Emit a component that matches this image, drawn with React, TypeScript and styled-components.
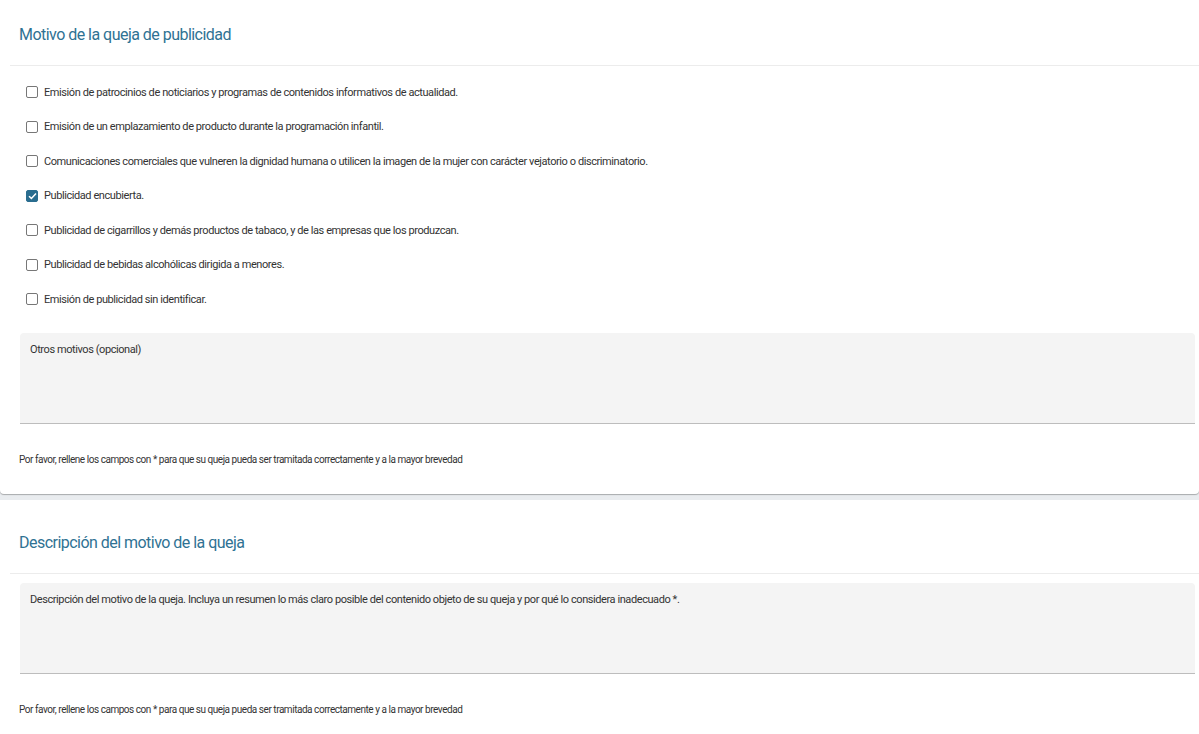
import { createGlobalStyle } from "styled-components";
import styled from "styled-components";

const GlobalStyle = createGlobalStyle`
  html, body {
    margin: 0;
    padding: 0;
    background: #e9ecef;
    font-family: Roboto, "Liberation Sans", sans-serif;
    color: #333;
  }
  * { box-sizing: border-box; }
`;

const Page = styled.div`
  margin-top: -8px;
  display: flex;
  flex-direction: column;
  gap: 6px;
`;

const Card = styled.section`
  background: #fff;
  border-radius: 0 0 4px 4px;
  box-shadow: 0 1px 1px rgba(0, 0, 0, 0.28);
  padding: 33px 4px 28px 19px;
`;

const Title = styled.h2`
  margin: 0;
  font-size: 16px;
  line-height: 20px;
  font-weight: 400;
  letter-spacing: -0.53px;
  color: #2f7293;
`;

const Divider = styled.hr`
  border: 0;
  border-top: 1px solid #ececec;
  margin: 20px -4px 0 -9px;
`;

const OptionList = styled.div`
  display: flex;
  flex-direction: column;
  padding: 9px 0 16px 7px;
`;

const Option = styled.label`
  display: flex;
  align-items: center;
  gap: 6px;
  height: 34.5px;
  font-size: 11px;
  letter-spacing: -0.42px;
  color: #333;
  cursor: pointer;
`;

const Box = styled.span<{ $checked: boolean }>`
  width: 12px;
  height: 12px;
  border-radius: 2px;
  border: 1px solid ${(p) => (p.$checked ? "#2a6d8f" : "#777")};
  background: ${(p) => (p.$checked ? "#2a6d8f" : "#fff")};
  display: flex;
  align-items: center;
  justify-content: center;
  flex-shrink: 0;
`;

const Field = styled.div<{ $top: number }>`
  margin: ${(p) => p.$top}px 0 0 1px;
  height: 91px;
  background: #f4f4f4;
  border-radius: 4px 4px 0 0;
  border-bottom: 1px solid #bdbdbd;
  padding: 10px 10px;
  font-size: 11px;
  letter-spacing: -0.42px;
  color: #333;
`;

const Note = styled.p`
  margin: 30px 0 0;
  font-size: 10px;
  line-height: 12px;
  letter-spacing: -0.46px;
  color: #333;
`;

const options = [
  { text: "Emisión de patrocinios de noticiarios y programas de contenidos informativos de actualidad.", checked: false },
  { text: "Emisión de un emplazamiento de producto durante la programación infantil.", checked: false },
  { text: "Comunicaciones comerciales que vulneren la dignidad humana o utilicen la imagen de la mujer con carácter vejatorio o discriminatorio.", checked: false },
  { text: "Publicidad encubierta.", checked: true },
  { text: "Publicidad de cigarrillos y demás productos de tabaco, y de las empresas que los produzcan.", checked: false },
  { text: "Publicidad de bebidas alcohólicas dirigida a menores.", checked: false },
  { text: "Emisión de publicidad sin identificar.", checked: false },
];

const NOTE = "Por favor, rellene los campos con * para que su queja pueda ser tramitada correctamente y a la mayor brevedad";

export default function App() {
  return (
    <>
      <GlobalStyle />
      <Page>
        <Card>
          <Title>Motivo de la queja de publicidad</Title>
          <Divider />
          <OptionList>
            {options.map((o) => (
              <Option key={o.text}>
                <Box $checked={o.checked}>
                  {o.checked && (
                    <svg width="9" height="8" viewBox="0 0 9 8">
                      <path d="M1 4.2 L3.4 6.4 L8 1.4" fill="none" stroke="#fff" strokeWidth="1.5" />
                    </svg>
                  )}
                </Box>
                {o.text}
              </Option>
            ))}
          </OptionList>
          <Field $top={0}>Otros motivos (opcional)</Field>
          <Note>{NOTE}</Note>
        </Card>
        <Card>
          <Title>Descripción del motivo de la queja</Title>
          <Divider />
          <Field $top={9}>
            Descripción del motivo de la queja. Incluya un resumen lo más claro posible del contenido objeto de su queja y por qué lo considera inadecuado *.
          </Field>
          <Note>{NOTE}</Note>
        </Card>
      </Page>
    </>
  );
}
